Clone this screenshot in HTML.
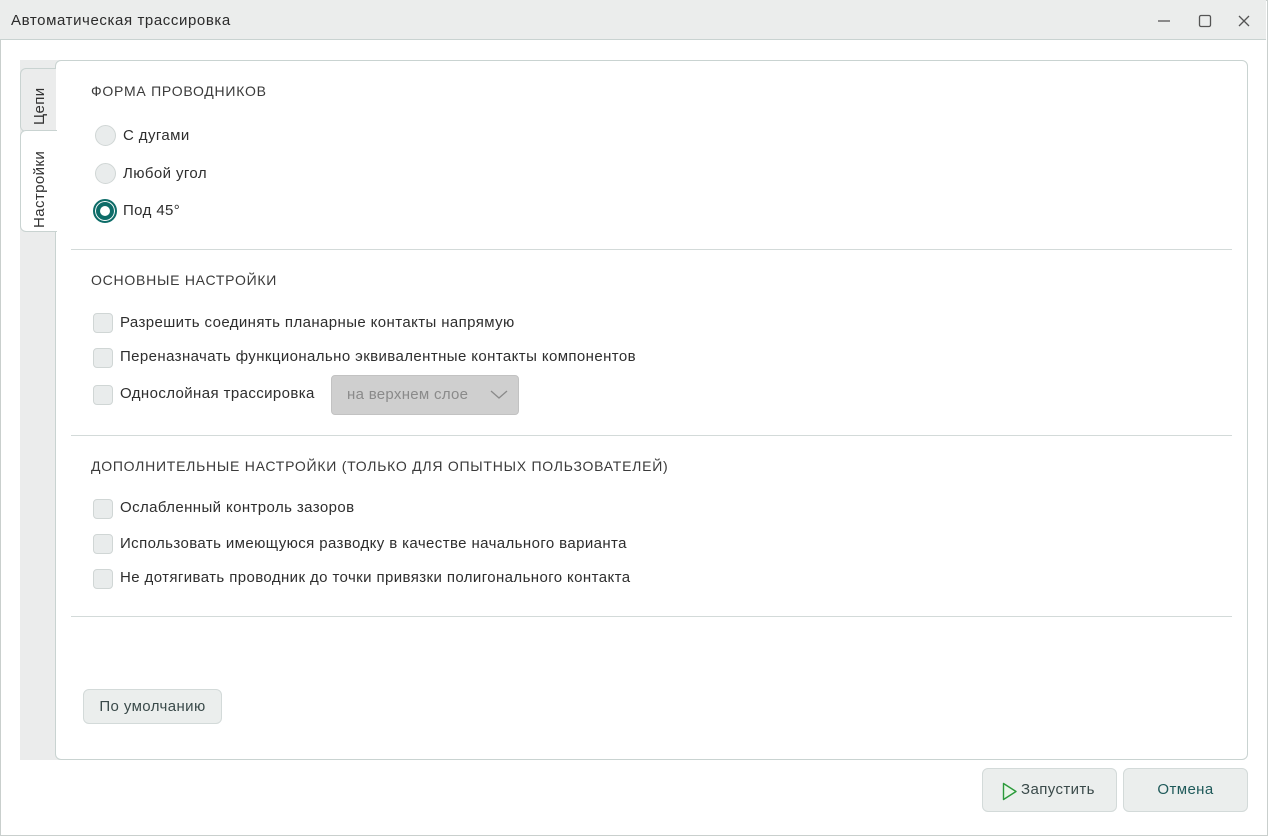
<!DOCTYPE html>
<html><head><meta charset="utf-8"><style>
*{box-sizing:border-box;margin:0;padding:0}
body{width:1268px;height:836px;overflow:hidden;background:#fff;font-family:"Liberation Sans",sans-serif;color:#333;font-size:14px;position:relative}
.win{position:absolute;left:0;top:0;width:1268px;height:836px;border:1px solid #c9cfcd}
.title{position:absolute;left:0;top:0;width:1266px;height:40px;background:#ebedec;border-bottom:1px solid #c9d3d1}
.title span{position:absolute;left:11px;top:12px;font-size:15px;color:#2b2b2b;letter-spacing:.6px}
.abs{position:absolute}
.strip{left:20px;top:60px;width:40px;height:700px;background:#ebecec}
.panel{left:55px;top:60px;width:1193px;height:700px;border:1px solid #c9d3d1;border-radius:6px;background:#fff}
.tab{position:absolute;left:20px;width:36px;border:1px solid #c9d3d1;border-right:none;border-radius:6px 0 0 6px}
.vt{position:absolute;transform:rotate(-90deg);transform-origin:left top;font-size:15px;white-space:nowrap;letter-spacing:.4px}
.h{position:absolute;left:91px;font-size:14px;color:#3a3a3a;letter-spacing:.75px}
.rad{position:absolute;left:95px;width:21px;height:21px;border-radius:50%;background:#e9ecec;border:1px solid #d0d6d5}
.lbl{position:absolute;font-size:15px;color:#2e2e2e;letter-spacing:.4px}
.cb{position:absolute;left:93px;width:20px;height:20px;border-radius:4px;background:#e9ecec;border:1px solid #d0d6d5}
.sep{position:absolute;left:71px;width:1161px;height:1px;background:#d3dad9}
.btn{position:absolute;background:#ebeeed;border:1px solid #d3dad9;border-radius:6px;font-size:15px;letter-spacing:.4px;color:#3a4a4a;text-align:center}
</style></head><body>
<div class="win"></div>
<div class="title"><span>Автоматическая трассировка</span>
<svg class="abs" style="left:1150px;top:12px" width="110" height="18"><line x1="8" y1="9" x2="20" y2="9" stroke="#555" stroke-width="1.3"/><rect x="49.5" y="3.5" width="11" height="11" rx="1.5" fill="none" stroke="#555" stroke-width="1.3"/><path d="M89 4L99 14M99 4L89 14" stroke="#555" stroke-width="1.3"/></svg></div>
<div class="abs strip"></div>
<div class="abs panel"></div>
<div class="tab" style="top:68px;height:64px;background:#ebecec"><div class="vt" style="left:10px;top:56px;color:#333">Цепи</div></div>
<div class="tab" style="top:130px;height:102px;background:#fff;width:37px"><div class="vt" style="left:10px;top:97px;color:#333">Настройки</div></div>
<div class="h" style="top:83px">ФОРМА ПРОВОДНИКОВ</div>
<div class="rad" style="top:125px"></div><div class="lbl" style="left:123px;top:127px">С дугами</div>
<div class="rad" style="top:163px"></div><div class="lbl" style="left:123px;top:165px">Любой угол</div>
<div class="rad" style="top:199px;left:93px;width:24px;height:24px;background:#0d6c68;border:2px solid #0d6c68;box-shadow:0 0 0 1px #fff inset"><div style="position:absolute;left:5px;top:5px;width:10px;height:10px;border-radius:50%;background:#fff"></div></div><div class="lbl" style="left:123px;top:202px">Под 45°</div>
<div class="sep" style="top:249px"></div>
<div class="h" style="top:272px">ОСНОВНЫЕ НАСТРОЙКИ</div>
<div class="cb" style="top:313px"></div><div class="lbl" style="left:120px;top:314px">Разрешить соединять планарные контакты напрямую</div>
<div class="cb" style="top:348px"></div><div class="lbl" style="left:120px;top:348px">Переназначать функционально эквивалентные контакты компонентов</div>
<div class="cb" style="top:385px"></div><div class="lbl" style="left:120px;top:385px">Однослойная трассировка</div>
<div class="abs" style="left:331px;top:375px;width:188px;height:40px;background:#cfcfcf;border:1px solid #c2c2c2;border-radius:4px"><span style="position:absolute;left:15px;top:10px;color:#8a8a8a;font-size:15px;letter-spacing:.3px">на верхнем слое</span><svg style="position:absolute;left:158px;top:12px" width="18" height="12"><path d="M1 3L9 10L17 3" fill="none" stroke="#8a8a8a" stroke-width="1.3"/></svg></div>
<div class="sep" style="top:435px"></div>
<div class="h" style="top:458px">ДОПОЛНИТЕЛЬНЫЕ НАСТРОЙКИ (ТОЛЬКО ДЛЯ ОПЫТНЫХ ПОЛЬЗОВАТЕЛЕЙ)</div>
<div class="cb" style="top:499px"></div><div class="lbl" style="left:120px;top:499px">Ослабленный контроль зазоров</div>
<div class="cb" style="top:534px"></div><div class="lbl" style="left:120px;top:535px">Использовать имеющуюся разводку в качестве начального варианта</div>
<div class="cb" style="top:569px"></div><div class="lbl" style="left:120px;top:569px">Не дотягивать проводник до точки привязки полигонального контакта</div>
<div class="sep" style="top:616px"></div>
<div class="btn" style="left:83px;top:689px;width:139px;height:35px;line-height:33px">По умолчанию</div>
<div class="btn" style="left:982px;top:768px;width:135px;height:44px;line-height:42px"><svg style="position:absolute;left:19px;top:13px" width="16" height="19"><path d="M1.5 1.5L14 9.5L1.5 17.5Z" fill="#e8f5e8" stroke="#2a9a3a" stroke-width="1.4" stroke-linejoin="round"/></svg><span style="position:absolute;left:38px;top:0">Запустить</span></div>
<div class="btn" style="left:1123px;top:768px;width:125px;height:44px;line-height:42px;color:#1f5a5a">Отмена</div>
</body></html>
